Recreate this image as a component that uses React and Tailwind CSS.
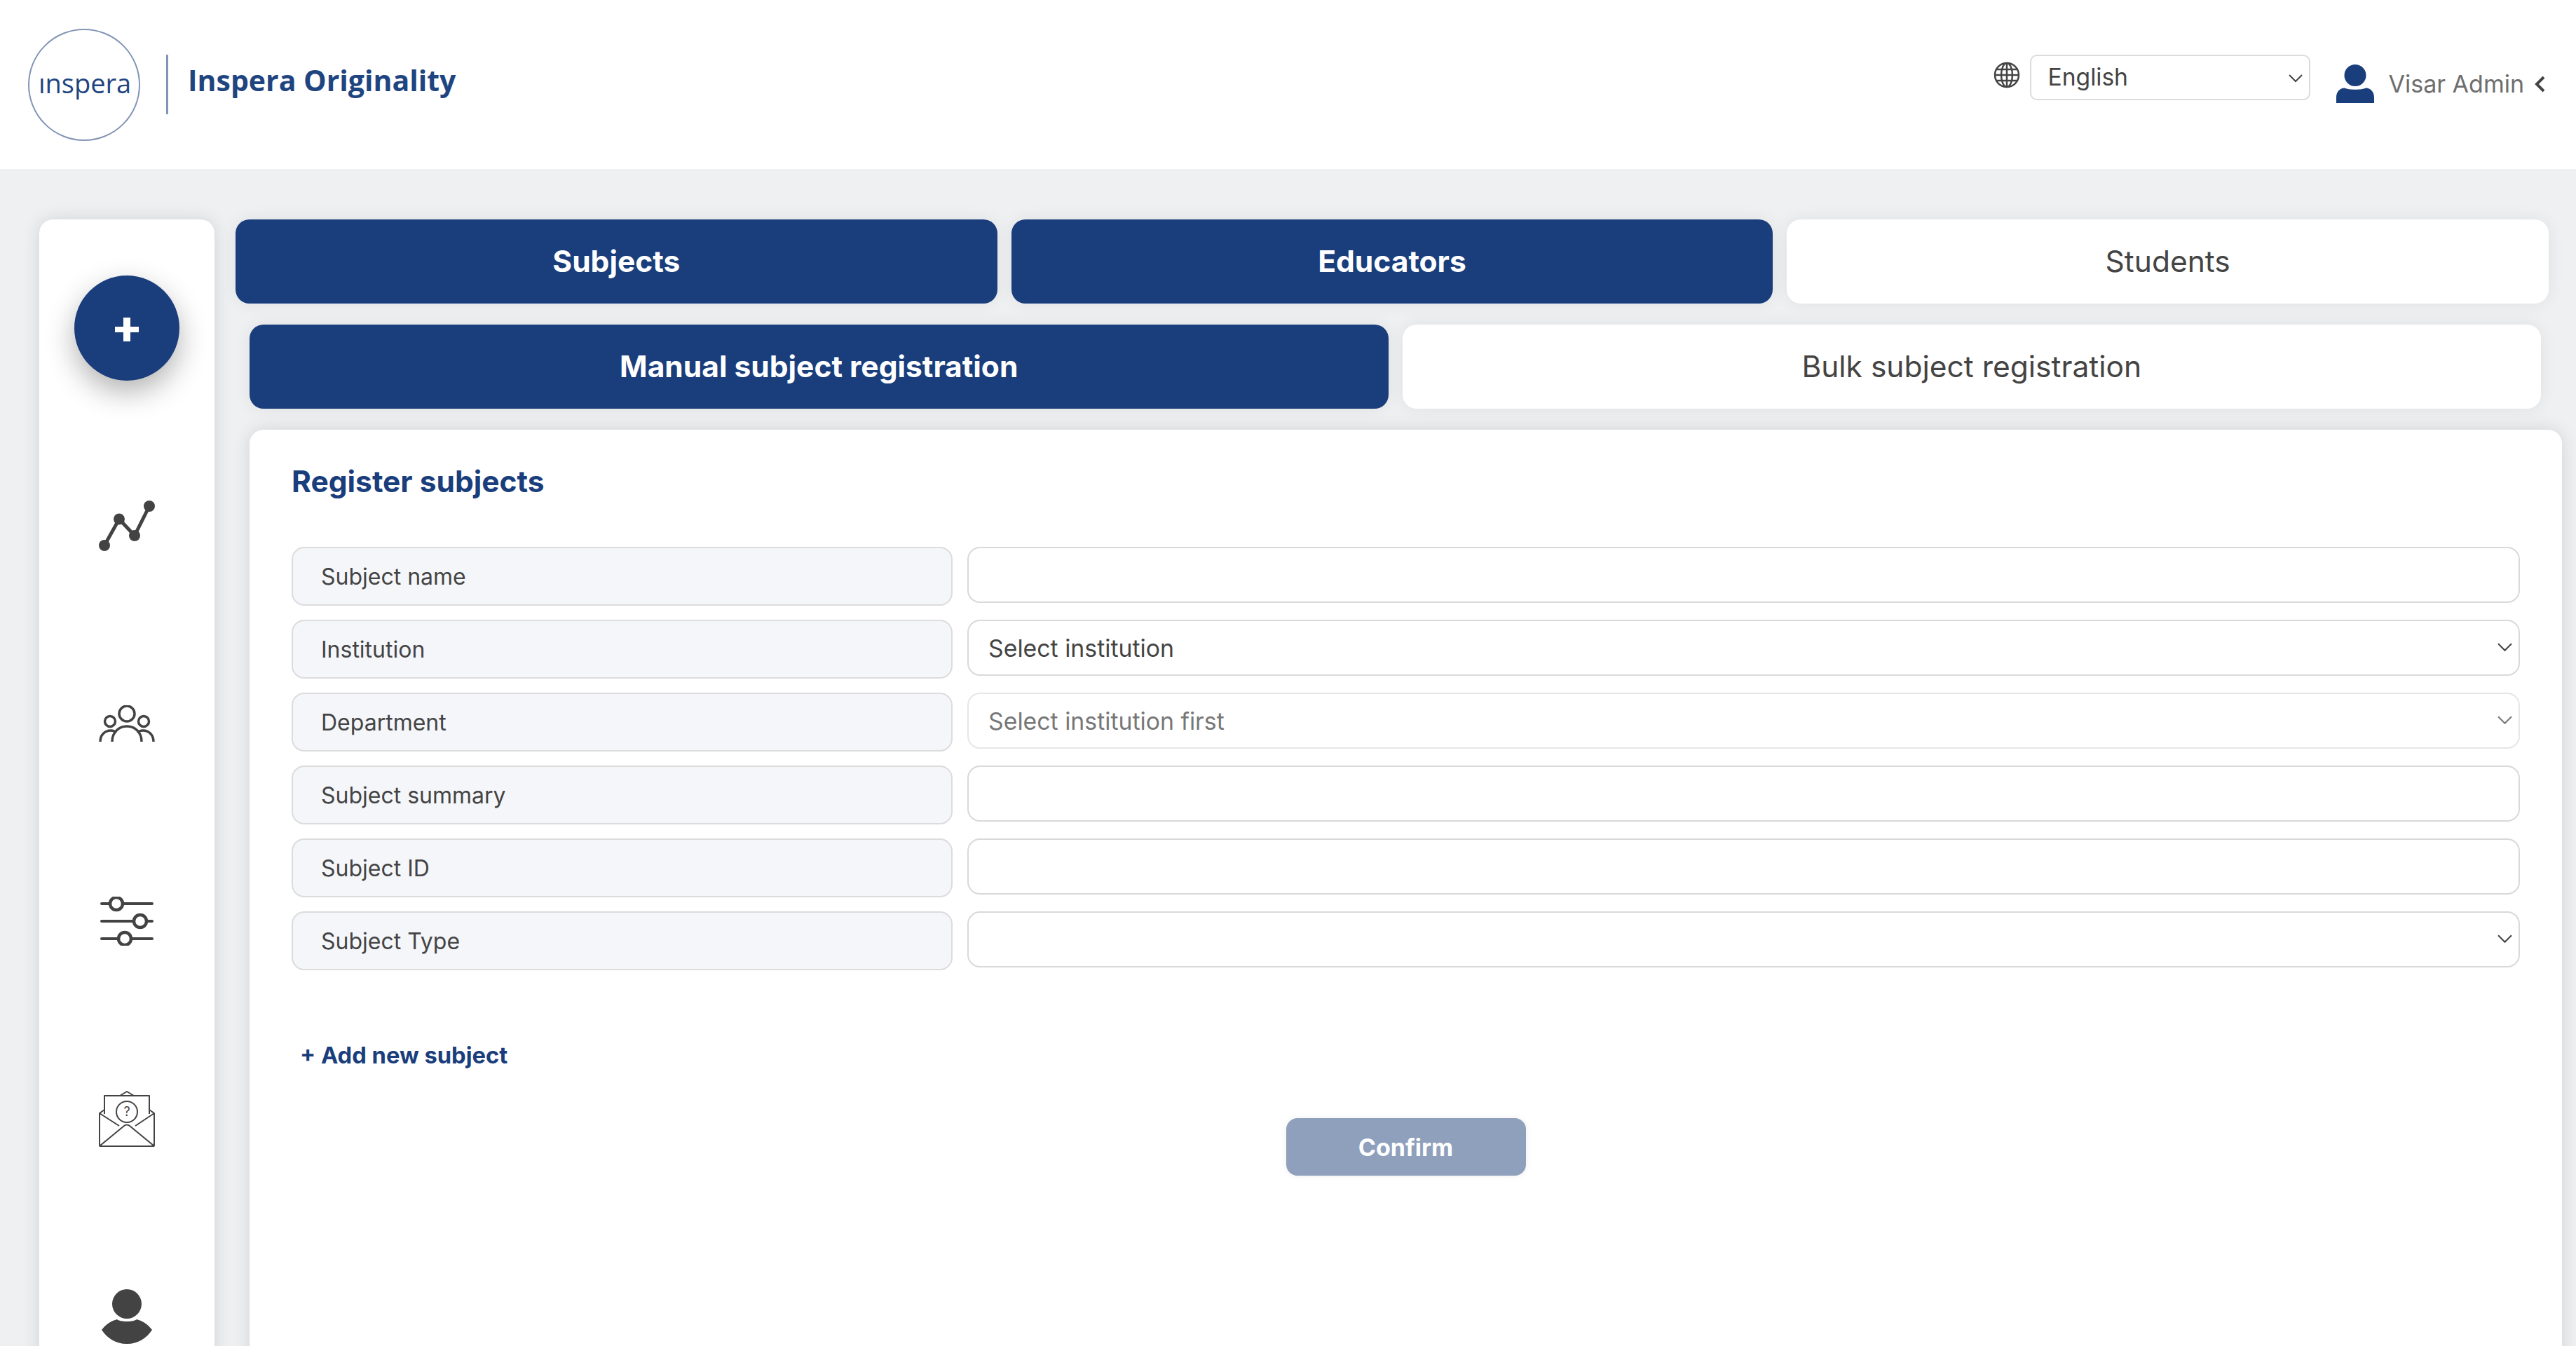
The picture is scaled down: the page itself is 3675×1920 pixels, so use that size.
const rows = [
  { label: 'Subject name', type: 'input' },
  { label: 'Institution', type: 'select', value: 'Select institution' },
  { label: 'Department', type: 'select', value: 'Select institution first', disabled: true },
  { label: 'Subject summary', type: 'input' },
  { label: 'Subject ID', type: 'input' },
  { label: 'Subject Type', type: 'select', value: '' },
];

function Chevron({ className }) {
  return (
    <svg viewBox="0 0 20 12" fill="none" stroke="currentColor" strokeWidth="2" className={className}>
      <path d="M1 1l9 9 9-9" />
    </svg>
  );
}

function FormRow({ row }) {
  const border = row.disabled ? 'border-[#e6e6e6]' : 'border-[#d9d9d9]';
  return (
    <div className="grid grid-cols-[943px_1fr] gap-x-[21px] h-[84px] items-start">
      <div className="h-[84px] rounded-[18px] border-2 border-[#dcdcdc] bg-[#f5f6fa] pl-[40px] pt-[2px] flex items-center text-[32px] text-[#444]">
        {row.label}
      </div>
      {row.type === 'input' ? (
        <input className={`h-[80px] w-full rounded-[18px] border-2 ${border} bg-white outline-none`} />
      ) : (
        <div className="relative">
          <select
            disabled={row.disabled}
            defaultValue={row.value}
            className={`h-[80px] w-full appearance-none rounded-[18px] border-2 ${border} bg-white pl-[28px] pt-[2px] text-[33.8px] outline-none ${row.disabled ? 'text-[#777]' : 'text-[#444]'}`}
          >
            <option value={row.value}>{row.value}</option>
          </select>
          <Chevron className={`absolute right-[11px] top-[33px] w-[21px] h-[13px] ${row.disabled ? 'text-[#777]' : 'text-[#444]'}`} />
        </div>
      )}
    </div>
  );
}

export default function App() {
  return (
    <div className="h-[1920px] overflow-hidden bg-[#eff0f2] font-['Inter',sans-serif]">
      <header className="h-[241px] bg-white flex items-center justify-between">
        <div className="flex items-center pl-[40px]">
          <div className="w-[160px] h-[160px] rounded-full border-2 border-[#8295b5] flex items-center justify-center pb-[4px] pl-[2px] font-['Open_Sans',sans-serif] text-[38px] font-medium text-[#1f4580]">
            ınspera
          </div>
          <div className="ml-[37px] w-[3px] h-[85px] bg-[#8295b5]" />
          <span className="ml-[28px] mb-[12px] font-['Open_Sans',sans-serif] text-[41px] font-bold text-[#1f4580]">Inspera Originality</span>
        </div>
        <div className="flex items-center pr-[44px]">
          <svg viewBox="0 0 38 38" fill="none" stroke="#444" strokeWidth="2.5" className="w-[38px] h-[38px] mb-[27px]">
            <circle cx="19" cy="19" r="17" />
            <ellipse cx="19" cy="19" rx="8" ry="17" />
            <path d="M19 2v34M4 11h30M4 27h30M2 19h34" />
          </svg>
          <div className="relative ml-[14px] mb-[20px]">
            <select className="w-[400px] h-[65px] appearance-none rounded-[10px] border-2 border-[#dcdcdc] bg-white pl-[24px] text-[33.6px] text-[#444] outline-none">
              <option>English</option>
            </select>
            <Chevron className="absolute right-[11px] top-[28px] w-[20px] h-[12px] text-[#444]" />
          </div>
          <svg viewBox="0 0 54 55" className="ml-[37px] w-[54px] h-[55px] mb-[2px]" fill="#1a3e7c">
            <ellipse cx="27" cy="15.5" rx="15.5" ry="15.5" />
            <path d="M0 55V47C0 39 5 33.5 12 33.5C17 36.5 37 36.5 42 33.5C49 33.5 54 39 54 47V55Z" />
          </svg>
          <span className="ml-[21px] text-[34px] text-[#6e6e6e] mb-[2px]">Visar Admin</span>
          <svg viewBox="0 0 16 24" fill="none" stroke="#444" strokeWidth="4" className="ml-[14px] w-[16px] h-[24px] mb-[2px]">
            <path d="M14 2L4 12l10 10" />
          </svg>
        </div>
      </header>

      <div className="flex pt-[72px] pl-[56px] pr-[20px] gap-x-[30px]">
        <aside className="w-[250px] shrink-0 h-[1720px] rounded-t-[20px] bg-white pt-[14px] shadow-[0_0_26px_rgba(0,0,0,0.12)] flex flex-col items-center">
          <div className="h-[282px] flex items-center justify-center">
            <div className="w-[150px] h-[150px] rounded-full bg-[#1a3e7c] flex items-center justify-center shadow-[0_16px_40px_rgba(0,0,0,0.3)]">
              <svg viewBox="0 0 34 34" className="w-[34px] h-[34px] mt-[3px]" fill="#fff">
                <path d="M12 0h10v13h12v8H22v13H12V21H0v-8h12z" />
              </svg>
            </div>
          </div>
          <div className="h-[282px] flex items-center justify-center">
            <svg viewBox="0 0 80 72" className="w-[80px] h-[72px]" fill="#434343" stroke="#434343">
              <path d="M8 64L29 26.5 51 50 72 8" fill="none" strokeWidth="5" />
              <circle cx="8" cy="64" r="8" stroke="none" />
              <circle cx="29" cy="26.5" r="8" stroke="none" />
              <circle cx="51" cy="50" r="8" stroke="none" />
              <circle cx="72" cy="8" r="8" stroke="none" />
            </svg>
          </div>
          <div className="h-[282px] flex items-center justify-center">
            <svg viewBox="0 0 80 52" className="w-[80px] h-[52px]" fill="none" stroke="#434343" strokeWidth="3.5">
              <circle cx="40" cy="12" r="11" />
              <circle cx="16" cy="23" r="7.5" />
              <circle cx="64" cy="23" r="7.5" />
              <path d="M19 52C19 38 29 30 40 30s21 8 21 22" />
              <path d="M2 52C2 42 9 36 17 36c3 0 6 1 8 3" />
              <path d="M78 52C78 42 71 36 63 36c-3 0-6 1-8 3" />
            </svg>
          </div>
          <div className="h-[282px] flex items-center justify-center">
            <svg viewBox="0 0 76 70" className="w-[76px] h-[70px]" fill="none" stroke="#434343" strokeWidth="4" strokeLinecap="round">
              <path d="M2 10h12M32 10h42M2 35h46M66 35h8M2 60h24M44 60h30" />
              <circle cx="23" cy="10" r="9" strokeWidth="4.5" />
              <circle cx="57" cy="35" r="9" strokeWidth="4.5" />
              <circle cx="35" cy="60" r="9" strokeWidth="4.5" />
            </svg>
          </div>
          <div className="h-[282px] flex items-center justify-center">
            <svg viewBox="0 0 80 80" className="w-[80px] h-[80px]" fill="none" stroke="#434343" strokeWidth="2" strokeLinejoin="round">
              <path d="M8 33V7h64v26" />
              <path d="M30 7l10-6 10 6" />
              <path d="M8 27L1 32v46c0 1 0 1 1 1h76c1 0 1 0 1-1V32l-7-5" />
              <path d="M1 32l28 18M79 32L52 50" />
              <path d="M2 78l34-28c2-2 6-2 8 0l34 28" />
              <circle cx="40" cy="30" r="15" />
              <text x="40" y="36" textAnchor="middle" fontSize="18" fill="#434343" stroke="none">?</text>
            </svg>
          </div>
          <div className="h-[282px] flex items-center justify-center">
            <svg viewBox="0 0 72 78" className="w-[72px] h-[78px]" fill="#434343">
              <circle cx="36" cy="21" r="21" />
              <path d="M0 58C6 50 14 45 22 43c4 4 24 4 28 0 8 2 16 7 22 15-8 12-20 20-36 20S8 70 0 58z" />
            </svg>
          </div>
        </aside>

        <main className="flex-1 min-w-0 flex flex-col">
          <div className="grid grid-cols-3 gap-x-[20px] pr-[19px]">
            <button className="h-[120px] rounded-[20px] bg-[#1a3e7c] text-white text-[42.5px] font-bold shadow-[0_0_24px_rgba(0,0,0,0.07)]">Subjects</button>
            <button className="h-[120px] rounded-[20px] bg-[#1a3e7c] text-white text-[42.5px] font-bold shadow-[0_0_24px_rgba(0,0,0,0.07)]">Educators</button>
            <button className="h-[120px] rounded-[20px] bg-white text-[#444] text-[42.5px] shadow-[0_0_24px_rgba(0,0,0,0.07)]">Students</button>
          </div>
          <div className="grid grid-cols-2 gap-x-[20px] pl-[20px] pr-[30px] mt-[30px]">
            <button className="h-[120px] rounded-[20px] bg-[#1a3e7c] text-white text-[42.5px] font-bold shadow-[0_0_24px_rgba(0,0,0,0.07)]">Manual subject registration</button>
            <button className="h-[120px] rounded-[20px] bg-white text-[#444] text-[42.5px] shadow-[0_0_24px_rgba(0,0,0,0.07)]">Bulk subject registration</button>
          </div>
          <section className="ml-[20px] mt-[30px] h-[1400px] rounded-t-[20px] bg-white px-[60px] pt-[44px] shadow-[0_0_26px_rgba(0,0,0,0.12)]">
            <h2 className="text-[42.5px] font-bold text-[#1a3e7c] leading-[60px]">Register subjects</h2>
            <div className="mt-[63px] flex flex-col gap-y-[20px]">
              {rows.map((row) => (
                <FormRow key={row.label} row={row} />
              ))}
            </div>
            <div className="mt-[98px] pl-[12px] text-[32.7px] font-bold text-[#1a3e7c] leading-[46px]">+ Add new subject</div>
            <div className="mt-[67px] flex justify-center">
              <button className="w-[342px] h-[82px] rounded-[16px] bg-[#8fa0bd] text-white text-[34px] font-bold shadow-[0_0_8px_rgba(0,0,0,0.08)]">Confirm</button>
            </div>
          </section>
        </main>
      </div>
    </div>
  );
}
